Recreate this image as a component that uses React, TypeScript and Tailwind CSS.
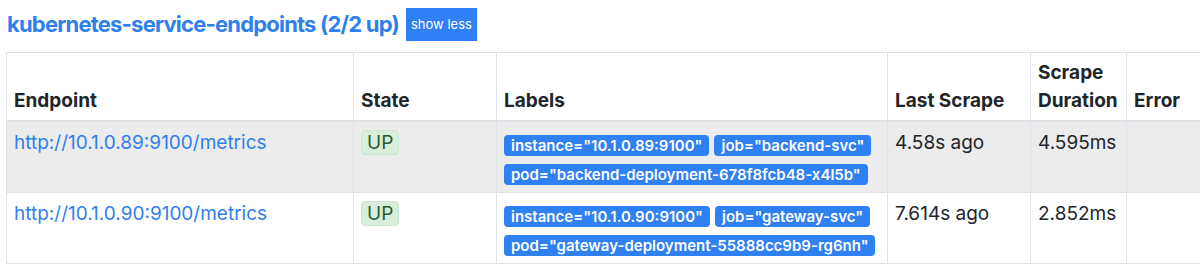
import React from "react";

type Target = {
  url: string;
  labels: string[];
  lastScrape: string;
  duration: string;
};

const targets: Target[] = [
  {
    url: "http://10.1.0.89:9100/metrics",
    labels: ['instance="10.1.0.89:9100"', 'job="backend-svc"', 'pod="backend-deployment-678f8fcb48-x4l5b"'],
    lastScrape: "4.58s ago",
    duration: "4.595ms",
  },
  {
    url: "http://10.1.0.90:9100/metrics",
    labels: ['instance="10.1.0.90:9100"', 'job="gateway-svc"', 'pod="gateway-deployment-55888cc9b9-rg6nh"'],
    lastScrape: "7.614s ago",
    duration: "2.852ms",
  },
];

const th = "border border-[#dee2e6] border-b-2 px-[7px] pt-[6px] pb-[5px] text-left align-bottom font-bold";
const td = "border border-[#dee2e6] px-[7px] pt-[7px] pb-[7px] align-top";

export default function App() {
  return (
    <div className="w-[1200px] h-[278px] overflow-hidden bg-white text-[#212529] font-['Inter','Liberation_Sans',sans-serif]">
      {/* header */}
      <div className="flex items-center gap-[7px] pl-[7px] pt-[8px]">
        <h2 className="text-[22px] font-bold leading-[33px] text-[#2f7fec] tracking-[-0.8px]">
          kubernetes-service-endpoints (2/2 up)
        </h2>
        <button className="h-[33px] px-[5px] bg-[#2f80f6] text-white text-[13px] leading-none">show less</button>
      </div>

      {/* targets table */}
      <div className="pl-[6px] mt-[11px]">
        <table className="w-[1240px] border-collapse table-fixed text-[19px] leading-[28px]">
          <colgroup>
            <col className="w-[347px]" />
            <col className="w-[143px]" />
            <col className="w-[391px]" />
            <col className="w-[143px]" />
            <col className="w-[96px]" />
            <col />
          </colgroup>
          <thead>
            <tr>
              <th className={th}>Endpoint</th>
              <th className={th}>State</th>
              <th className={th}>Labels</th>
              <th className={th}>Last Scrape</th>
              <th className={th}>Scrape Duration</th>
              <th className={th}>Error</th>
            </tr>
          </thead>
          <tbody>
            {targets.map((t, i) => (
              <tr key={t.url} className={i % 2 === 0 ? "bg-[#ececec]" : "bg-white"}>
                <td className={td}>
                  <a href="#" className="text-[#2f7fec]">{t.url}</a>
                </td>
                <td className={td}>
                  <span className="inline-block mt-[-3px] px-[5px] leading-[23px] rounded-[4px] bg-[#d8eedb] border border-[#cbe6d0] text-[#285a30]">
                    UP
                  </span>
                </td>
                <td className={td}>
                  <div className="flex flex-wrap gap-x-[5px] gap-y-[8px] pt-[6px]">
                    {t.labels.map((l) => (
                      <span
                        key={l}
                        className="inline-block h-[21px] px-[7px] rounded-[4px] bg-[#2f80f1] text-white text-[15px] font-semibold leading-[21px] whitespace-nowrap"
                      >
                        {l}
                      </span>
                    ))}
                  </div>
                </td>
                <td className={td}>{t.lastScrape}</td>
                <td className={td}>{t.duration}</td>
                <td className={td}></td>
              </tr>
            ))}
          </tbody>
        </table>
      </div>
    </div>
  );
}
